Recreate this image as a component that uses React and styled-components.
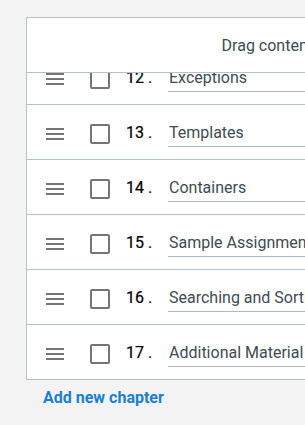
import React, { useEffect, useRef } from "react";
import styled, { createGlobalStyle } from "styled-components";

const GlobalStyle = createGlobalStyle`
  html, body {
    margin: 0;
    padding: 0;
    background: #f3f3f3;
    overflow: hidden;
    font-family: Roboto, "Liberation Sans", sans-serif;
  }
`;

const Page = styled.div`
  padding: 17px 0 0 26px;
  width: 700px;
`;

const Panel = styled.div`
  width: 620px;
  background: #fff;
  border: 1px solid #b3c3ce;
`;

const Header = styled.div`
  height: 54px;
  display: flex;
  align-items: center;
  justify-content: center;
  border-bottom: 1px solid #b3c3ce;
  font-size: 16px;
  color: #3d4b55;
`;

const List = styled.div`
  height: 306px;
  overflow-y: auto;
  scrollbar-width: none;
  &::-webkit-scrollbar {
    display: none;
  }
`;

const Row = styled.div`
  height: 55px;
  display: flex;
  align-items: center;
  padding: 3px 0 0 16px;
  box-sizing: border-box;
  border-bottom: 1px solid #b3c3ce;
  &:last-child {
    height: 54px;
    border-bottom: none;
  }
`;

const Handle = styled.svg`
  width: 24px;
  height: 24px;
  fill: #757575;
  flex-shrink: 0;
  cursor: grab;
`;

const Check = styled.span`
  width: 20px;
  height: 20px;
  box-sizing: border-box;
  border: 2px solid #757575;
  border-radius: 2px;
  margin-left: 23px;
  flex-shrink: 0;
`;

const Num = styled.span`
  width: 42px;
  margin: -2px 0 0 16px;
  font-size: 16px;
  font-weight: 400;
  -webkit-text-stroke: 0.2px #000;
  color: #000;
  flex-shrink: 0;
`;

const TitleInput = styled.input`
  width: 420px;
  height: 28px;
  margin-top: -2px;
  padding: 0 0 0 1px;
  border: none;
  border-bottom: 1px solid #a7b8c6;
  outline: none;
  font-family: Roboto, "Liberation Sans", sans-serif;
  font-size: 16px;
  color: #3d4b55;
  background: transparent;
`;

const AddLink = styled.a`
  display: inline-block;
  margin: 8px 0 0 17px;
  font-size: 16px;
  font-weight: bold;
  color: #1a7fd4;
  text-decoration: none;
  cursor: pointer;
`;

const chapters = [
  "Introduction",
  "Variables and Types",
  "Operators",
  "Control Flow",
  "Functions",
  "Arrays",
  "Pointers",
  "Classes",
  "Inheritance",
  "Polymorphism",
  "File I/O",
  "Exceptions",
  "Templates",
  "Containers",
  "Sample Assignments",
  "Searching and Sorting",
  "Additional Material",
];

const MenuIcon = () => (
  <Handle viewBox="0 0 24 24">
    <path d="M3 18h18v-2H3v2zm0-5h18v-2H3v2zm0-7v2h18V6H3z" />
  </Handle>
);

const App = () => {
  const listRef = useRef(null);

  useEffect(() => {
    if (listRef.current) {
      listRef.current.scrollTop = listRef.current.scrollHeight;
    }
  }, []);

  return (
    <Page>
      <GlobalStyle />
      <Panel>
        <Header>Drag content to reorder chapters</Header>
        <List ref={listRef}>
          {chapters.map((title, i) => (
            <Row key={title}>
              <MenuIcon />
              <Check />
              <Num>{i + 1} .</Num>
              <TitleInput defaultValue={title} />
            </Row>
          ))}
        </List>
      </Panel>
      <AddLink>Add new chapter</AddLink>
    </Page>
  );
};

export default App;
